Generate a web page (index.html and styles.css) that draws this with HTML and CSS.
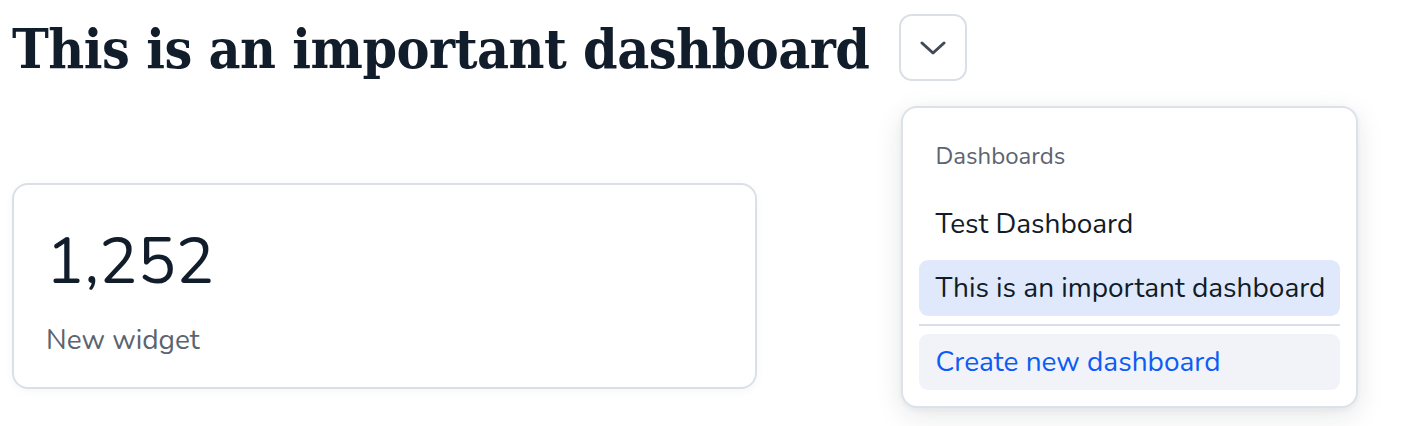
FILE: index.html
```html
<!DOCTYPE html>
<html>
<head>
<meta charset="utf-8">
<link rel="stylesheet" href="styles.css">
</head>
<body>
<div class="page">
  <header class="header">
    <h1 class="title">This is an important dashboard</h1>
    <div class="switcher">
      <button class="toggle" type="button" aria-label="Switch dashboard">
        <svg width="26" height="14" viewBox="0 0 26 14"><polyline points="2,2 13,12 24,2" fill="none" stroke="#414a56" stroke-width="3" stroke-linecap="round" stroke-linejoin="round"/></svg>
      </button>
      <div class="menu">
        <div class="menu-label">Dashboards</div>
        <div class="menu-item">Test Dashboard</div>
        <div class="menu-item active">This is an important dashboard</div>
        <div class="menu-sep"></div>
        <div class="menu-item create">Create new dashboard</div>
      </div>
    </div>
  </header>
  <section class="grid">
    <div class="card">
      <div class="value">1,252</div>
      <div class="label">New widget</div>
    </div>
  </section>
</div>
</body>
</html>
```
FILE: styles.css
```css
html, body {
  margin: 0;
  padding: 0;
  background: #ffffff;
}
body {
  font-family: "Nunito", "Lato", "Noto Sans", sans-serif;
  color: #111c28;
}
.page {
  padding: 14px 12px 0 12px;
  min-height: 426px;
  box-sizing: border-box;
}
.header {
  display: flex;
  align-items: flex-start;
  gap: 30px;
  height: 169px;
}
.title {
  margin: 0;
  font-family: "DejaVu Serif Condensed", "DejaVu Serif", serif;
  font-weight: bold;
  font-size: 55px;
  line-height: 70px;
  color: #111d2a;
  letter-spacing: -0.5px;
  white-space: nowrap;
}
.switcher {
  position: relative;
}
.toggle {
  width: 68px;
  height: 67px;
  box-sizing: border-box;
  border: 2px solid #d9dee7;
  border-radius: 13px;
  background: #ffffff;
  display: flex;
  align-items: center;
  justify-content: center;
  padding: 0;
  margin: 0;
}
.menu {
  position: absolute;
  left: 2px;
  top: 92px;
  width: 457px;
  box-sizing: border-box;
  background: #ffffff;
  border: 2px solid #dde2ea;
  border-radius: 16px;
  padding: 16px;
  display: flex;
  flex-direction: column;
  gap: 8px;
  box-shadow: 0 8px 28px rgba(20, 30, 50, 0.10), 0 2px 6px rgba(20, 30, 50, 0.05);
}
.menu-label {
  height: 64px;
  display: flex;
  align-items: center;
  padding: 0 16px;
  font-size: 24px;
  color: #5b6470;
}
.menu-item {
  height: 56px;
  display: flex;
  align-items: center;
  padding: 0 16px;
  border-radius: 9px;
  font-size: 28px;
  color: #111c28;
  white-space: nowrap;
}
.menu-item.active {
  background: #dfe9fb;
}
.menu-item.create {
  background: #f1f3f8;
  color: #0d5cf5;
}
.menu-sep {
  height: 2px;
  background: #d9dee7;
}
.grid {
  display: flex;
}
.card {
  width: 745px;
  height: 206px;
  box-sizing: border-box;
  border: 2px solid #dbe0e8;
  border-radius: 16px;
  background: #ffffff;
  box-shadow: 0 2px 10px rgba(20, 30, 50, 0.04);
  padding: 41px 32px 0 32px;
}
.value {
  font-size: 64px;
  line-height: 72px;
  color: #111d2a;
}
.label {
  margin-top: 23px;
  font-size: 28px;
  color: #5b6470;
}
```
